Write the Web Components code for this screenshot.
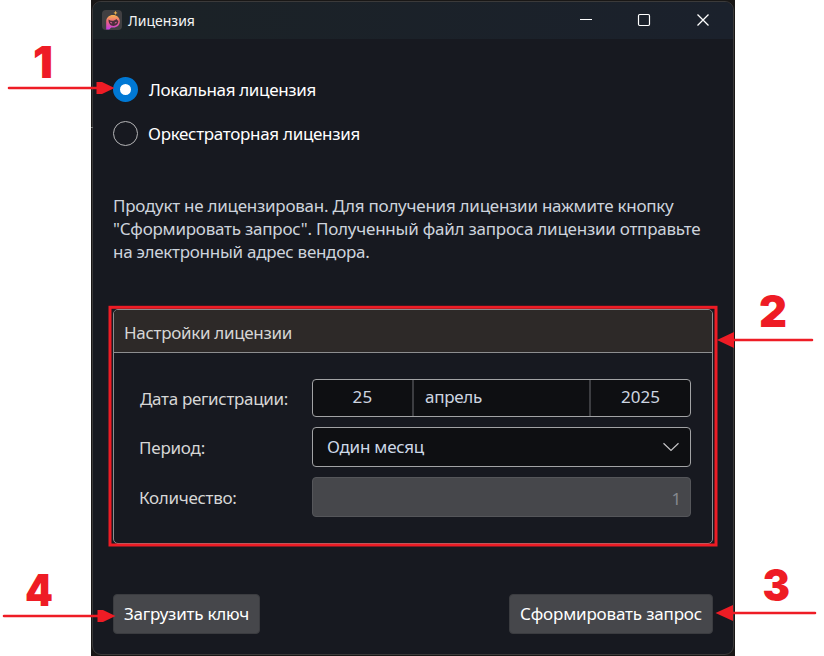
<!DOCTYPE html>
<html lang="ru">
<head>
<meta charset="utf-8">
<title>Лицензия</title>
<style>
html, body { margin: 0; background: #fff; overflow: hidden; }
body { font-family: "Noto Sans", "Open Sans", sans-serif; font-size: 17px; }
</style>
</head>
<body>
<license-page></license-page>
<script>
const define = (name, html, setup) => customElements.define(name, class extends HTMLElement {
  connectedCallback() {
    if (this.shadowRoot) return;
    const t = document.createElement('template');
    t.innerHTML = html;
    this.attachShadow({ mode: 'open' }).append(t.content.cloneNode(true));
    if (setup) setup(this, this.shadowRoot);
  }
});

/* A single line of text whose tracking is adjusted to a given width. */
define('fit-text', `<style>
:host { display: inline-block; white-space: nowrap; line-height: 1; }
span { display: inline-block; line-height: inherit; }
</style><span><slot></slot></span>`, (el, root) => {
  const w = +el.getAttribute('w');
  const span = root.querySelector('span');
  const natural = span.getBoundingClientRect().width;
  const n = el.textContent.length;
  if (natural && w) span.style.letterSpacing = ((w - natural) / n).toFixed(3) + 'px';
});

define('app-logo', `<style>:host { display: block; width: 20px; height: 20px; } svg { display: block; }</style>
<svg width="20" height="20" viewBox="0 0 20 20">
<defs><linearGradient id="g" gradientUnits="userSpaceOnUse" x1="0" y1="4" x2="0" y2="19"><stop offset="0.1" stop-color="#f5ae52"/><stop offset="0.5" stop-color="#ee667c"/><stop offset="1" stop-color="#c83fe0"/></linearGradient></defs>
<rect width="20" height="20" rx="4" fill="#414042"/>
<path d="M4.200 19.500V11.500C4.200 7.600 7.300 5 11 5c3.900 0 6.800 2.700 6.800 6.400 0 3.700-2.800 6-6.300 6H9.200L7.200 19.500Z" fill="url(#g)"/>
<path d="M6.500 9.500c2.500 1.800 5.700 1.700 8-.5.300.9.900 1.400 1.900 1.700.1 3-2 5.200-5 5.200-2.900 0-4.900-2.200-4.900-6.400Z" fill="#49303c"/>
<path d="M8.300 12.300l1.800.8M14.600 12.300l-1.800.8" stroke="#ed64a0" stroke-width="1"/>
<path d="M13.500 0.800l.7 1.500 1.400.6-1.400.6-.7 1.500-.7-1.500-1.400-.6 1.400-.6Z" fill="#e8ae4c"/>
</svg>`);

define('title-bar', `<style>
:host { display: flex; align-items: center; height: 37px; padding-left: 9px; background: linear-gradient(90deg, #1b2226, #1b212c); color: #f4f4f4; font-size: 14px; flex: none; }
fit-text { margin-left: 6px; flex: 1; }
app-logo { margin-top: -1px; }
svg { display: block; flex: none; }
</style>
<app-logo></app-logo><fit-text w="68"><slot></slot></fit-text>
<svg width="155" height="37" viewBox="0 0 155 37" fill="none" stroke="#fff">
<path d="M2 17.500h12" />
<rect x="60.500" y="12.500" width="11" height="11" rx="1.200" stroke-width="1.200"/>
<path d="M119.500 12.500l11 11M130.500 12.500l-11 11" stroke-width="1.250"/>
</svg>`);

define('radio-item', `<style>
:host { display: flex; align-items: center; height: 26px; color: #fff; }
i { box-sizing: border-box; width: 25px; height: 25px; border: 1px solid #b4b4b6; border-radius: 50%; flex: none; margin-right: 10px; }
:host([checked]) i { border: 7.500px solid #0078d4; background: #fff; margin-right: 11px; }
</style><i></i><slot></slot>`);

define('group-panel', `<style>
:host { display: flex; flex-direction: column; box-sizing: border-box; border: 1px solid #8d8e90; border-radius: 5px; overflow: hidden; }
header { display: flex; align-items: center; padding: 2px 0 0 10px; box-sizing: border-box; background: #2d2928; color: #d6d6d6; border-bottom: 1px solid #8d8e90; height: 43px; flex: none; }
section { display: flex; flex-direction: column; gap: 10px; padding: 26px 21px 0 26px; }
</style><header><slot name="title"></slot></header><section><slot></slot></section>`);

define('form-row', `<style>
:host { display: flex; align-items: center; color: #d6d6d6; }
div { width: 172px; flex: none; }
</style><div><slot name="label"></slot></div><slot></slot>`);

define('date-field', `<style>
:host { display: grid; grid-template-columns: 99px 177px 1fr; flex: 1; box-sizing: border-box; height: 38px; border: 1px solid #a2a3a5; border-radius: 4px; background: #0e0f12; color: #cdd5e0; overflow: hidden; }
div { display: flex; align-items: center; justify-content: center; padding-bottom: 3px; box-sizing: border-box; }
div + div { border-left: 2px solid #3c3d41; }
.m { justify-content: flex-start; padding-left: 11px; }
</style><div><slot name="day"></slot></div><div class="m"><slot name="month"></slot></div><div><slot name="year"></slot></div>`);

define('combo-box', `<style>
:host { display: flex; align-items: center; justify-content: space-between; flex: 1; box-sizing: border-box; height: 40px; border: 1px solid #a2a3a5; border-radius: 4px; background: #0e0f12; color: #cdd9e8; padding: 0 10px 0 14px; }
::slotted(fit-text) { margin-top: -1px; }
</style><slot></slot><svg width="18" height="10" viewBox="0 0 18 10" fill="none" stroke="#c4c4c6" stroke-width="1.200"><path d="M1.500 1.200 9 8.500 16.500 1.200"/></svg>`);

define('number-box', `<style>
:host { display: flex; align-items: center; justify-content: flex-end; flex: 1; box-sizing: border-box; height: 40px; border: 1px solid #55565a; border-radius: 4px; background: #46474b; color: #85888e; padding: 3px 9px 0 0; }
</style><slot></slot>`);

define('push-button', `<style>
:host { display: flex; align-items: center; justify-content: center; box-sizing: border-box; height: 40px; border: 1px solid #3b3c40; border-radius: 4px; background: #46474b; color: #fff; padding-bottom: 2px; }
</style><slot></slot>`);

define('license-window', `<style>
:host { display: block; box-sizing: border-box; width: 644px; height: 656px; margin-left: 91px; padding: 1px; background: #191716; }
.win { box-sizing: border-box; height: 654px; border: 1px solid #3b3a3a; border-radius: 9px; overflow: hidden; background: #171920; display: flex; flex-direction: column; }
main { padding: 37px 20px 0; display: flex; flex-direction: column; }
.radios { display: flex; flex-direction: column; gap: 18px; }
.msg { margin-top: 48px; color: #cdd3dc; line-height: 23px; display: flex; flex-direction: column; align-items: flex-start; }
.msg fit-text { line-height: 23px; }
group-panel { margin-top: 46px; height: 235px; }
footer { margin-top: 50px; display: flex; justify-content: space-between; }
</style>
<div class="win"><title-bar>Лицензия</title-bar>
<main>
<div class="radios">
<radio-item checked><fit-text w="167">Локальная лицензия</fit-text></radio-item>
<radio-item><fit-text w="212">Оркестраторная лицензия</fit-text></radio-item>
</div>
<div class="msg"><fit-text w="560.500">Продукт не лицензирован. Для получения лицензии нажмите кнопку</fit-text><fit-text w="587.500">"Сформировать запрос". Полученный файл запроса лицензии отправьте</fit-text><fit-text w="256.500">на электронный адрес вендора.</fit-text></div>
<group-panel><fit-text slot="title" w="168">Настройки лицензии</fit-text>
<form-row><fit-text slot="label" w="148">Дата регистрации:</fit-text><date-field><fit-text slot="day" w="20">25</fit-text><fit-text slot="month" w="57">апрель</fit-text><fit-text slot="year" w="39">2025</fit-text></date-field></form-row>
<form-row><fit-text slot="label" w="66" style="margin-left:-1px">Период:</fit-text><combo-box><fit-text w="97">Один месяц</fit-text></combo-box></form-row>
<form-row><fit-text slot="label" w="97.500" style="margin-left:-1px">Количество:</fit-text><number-box><fit-text w="9.500">1</fit-text></number-box></form-row>
</group-panel>
<footer><push-button style="width:147px"><fit-text w="125">Загрузить ключ</fit-text></push-button><push-button style="width:204px"><fit-text w="182">Сформировать запрос</fit-text></push-button></footer>
</main></div>`);

/* Numbered callouts with arrows, drawn over the window. */
define('callout-layer', `<style>
:host { position: absolute; left: 0; top: 0; width: 824px; height: 656px; pointer-events: none; }
svg { display: block; }
text { font: 900 44px Inter, "Liberation Sans", sans-serif; fill: #ee1c25; }
</style>
<svg width="824" height="656" viewBox="0 0 824 656">
<path d="M91 127.500h2" stroke="#777"/>
<rect x="110" y="307.300" width="606" height="237.700" fill="none" stroke="#ee1c25" stroke-width="3"/>
<g stroke="#ee1c25" stroke-width="2.600" stroke-linecap="round">
<path d="M9 88H97M733 340H812M733 613H815M4 616H98"/></g>
<path fill="#ee1c25" d="M96.500 82H102L114.500 88 102 94H96.500ZM97.500 610H103L115.500 616 103 622H97.500ZM717 340 734 332V348ZM715.500 613 733 605V621Z"/>
<text x="33" y="78" textLength="20" lengthAdjust="spacingAndGlyphs">1</text>
<text x="759" y="327" textLength="28" lengthAdjust="spacingAndGlyphs">2</text>
<text x="762.500" y="601" textLength="27.500" lengthAdjust="spacingAndGlyphs">3</text>
<text x="25" y="606" textLength="28" lengthAdjust="spacingAndGlyphs">4</text>
</svg>`);

define('license-page', `<style>
:host { display: block; position: relative; width: 824px; height: 656px; overflow: hidden; background: #fff; }
</style><license-window></license-window><callout-layer></callout-layer>`);
</script>
</body>
</html>
